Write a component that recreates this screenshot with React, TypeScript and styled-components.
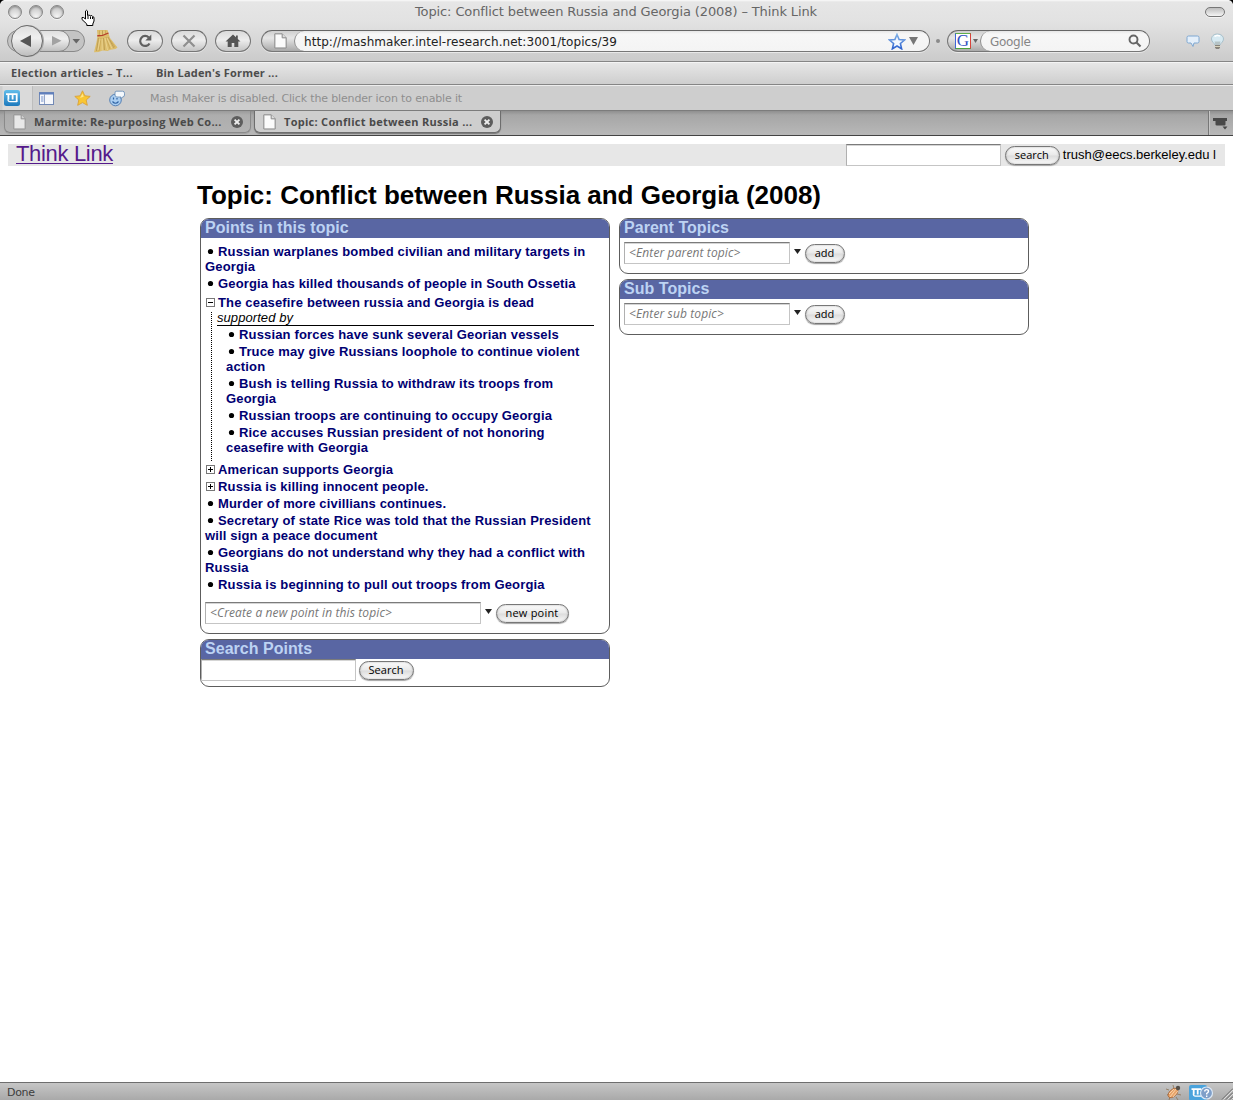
import React from "react";
import styled, { createGlobalStyle } from "styled-components";

const ui = `"Open Sans", "Noto Sans", sans-serif`;
const wide = `"DejaVu Sans", sans-serif`;
const helv = `"Liberation Sans", Arial, sans-serif`;

const GlobalStyle = createGlobalStyle`
  *, *::before, *::after { box-sizing: border-box; }
  body { margin: 0; background: #fff; color: #000; font-family: ${helv}; }
  svg { display: block; flex: none; }
  button, input { font: inherit; margin: 0; }
`;

const Window = styled.div`
  display: flex;
  flex-direction: column;
  height: 1100px;
  overflow: hidden;
`;

/* ---------- browser chrome ---------- */

const Chrome = styled.header`
  position: relative;
  height: 62px;
  background: linear-gradient(#fafafa 0, #e6e6e6 2px, #e2e2e2 22px, #cbcbcb 61px);
  border-bottom: 1px solid #858585;
`;
const Corner = styled.svg<{ $right?: boolean }>`
  position: absolute;
  top: 0;
  ${p => (p.$right ? "right: 0; transform: scaleX(-1);" : "left: 0;")}
`;
const TitleBar = styled.div`
  display: grid;
  grid-template-columns: 100px 1fr 100px;
  height: 23px;
  align-items: center;
`;
const Lights = styled.div`
  display: flex;
  gap: 7px;
  padding-left: 8px;
`;
const Light = styled.span`
  width: 14px;
  height: 14px;
  border-radius: 50%;
  border: 1px solid #858585;
  background: radial-gradient(circle at 50% 90%, #f6f6f6 0, #d5d5d5 55%, #b9b9b9 100%);
  box-shadow: inset 0 1px 2px #8a8a8a, 0 1px 0 #f5f5f5;
`;
const Title = styled.div`
  font: 13px ${wide};
  letter-spacing: -0.112px;
  color: #666;
  text-align: center;
  white-space: nowrap;
  padding-right: 1px;
`;
const Pill = styled.span`
  justify-self: end;
  margin-right: 8px;
  width: 20px;
  height: 10px;
  border: 1.5px solid #767676;
  border-radius: 5px;
  background: linear-gradient(#bdbdbd, #f5f5f5);
  box-shadow: 0 1px 0 #f4f4f4;
`;
const Cursor = styled.svg`
  position: absolute;
  left: 80px;
  top: 9px;
`;
const NavBar = styled.div`
  display: flex;
  align-items: center;
  height: 36px;
  padding-left: 7px;
`;
const NavButton = styled.button`
  display: flex;
  align-items: center;
  justify-content: center;
  width: 36px;
  height: 22px;
  margin-right: 8px;
  padding: 0;
  border: 1px solid #777;
  border-top-color: #666;
  border-radius: 11px;
  background: linear-gradient(#dadada, #ededed 45%, #c4c4c4);
  box-shadow: 0 1px 0 #e9e9e9;
`;
const Combo = styled.div<{ $w: number }>`
  display: flex;
  width: ${p => p.$w}px;
  height: 22px;
  border: 1px solid #777;
  border-top-color: #666;
  border-radius: 11px;
  background: linear-gradient(#cfcfcf, #e6e6e6 35%, #a9a9a9);
  box-shadow: 0 1px 0 #e9e9e9;
`;
const Lead = styled.div<{ $w: number }>`
  display: flex;
  align-items: center;
  width: ${p => p.$w}px;
`;
const Field = styled.div<{ $muted?: boolean; $pad: number; $ls: number }>`
  display: flex;
  flex: 1;
  align-items: center;
  padding: 0 ${p => p.$pad}px 0 9px;
  border-radius: 10px;
  border-left: 1px solid #8d8d8d;
  background: linear-gradient(#e6e6e6, #f7f7f7 3px, #f4f4f4);
  font: 12px/20px ${wide};
  letter-spacing: ${p => p.$ls}px;
  color: ${p => (p.$muted ? "#868686" : "#222")};
  white-space: nowrap;
`;
const FieldText = styled.span`
  flex: 1;
  padding-top: 1px;
`;
const Dot = styled.span`
  width: 4px;
  height: 4px;
  margin: 0 7px 0 6px;
  border-radius: 50%;
  background: #8a8a8a;
`;

const Bookmarks = styled.div`
  display: flex;
  align-items: center;
  height: 23px;
  border-top: 1px solid #f4f4f4;
  border-bottom: 1px solid #858585;
  background: linear-gradient(#e6e6e6, #cecece);
  padding: 0 0 2px 11px;
`;
const Bookmark = styled.span<{ $w: number; $ls: number }>`
  width: ${p => p.$w}px;
  font: bold 11px/20px ${ui};
  letter-spacing: ${p => p.$ls}px;
  color: #4c4c4c;
  white-space: nowrap;
`;
const ToolRow = styled.div`
  display: flex;
  align-items: center;
  height: 26px;
  border-top: 1px solid #ededed;
  border-bottom: 1px solid #7c7c7c;
  background: #cecece;
`;
const MashCell = styled.div`
  display: flex;
  align-items: center;
  width: 33px;
  height: 24px;
  padding-left: 4px;
  border-right: 1px solid #bdbdbd;
  background: linear-gradient(90deg, #cecece 2px, #dadada 3px);
`;
const ToolIcon = styled.span<{ $gap: number }>`
  margin-left: ${p => p.$gap}px;
`;
const ToolNote = styled.span`
  margin-left: 25px;
  padding-top: 1px;
  font: 11px/20px ${wide};
  letter-spacing: -0.149px;
  color: #8e8e8e;
`;
const TabStrip = styled.div`
  display: flex;
  height: 25px;
  padding-left: 4px;
  border-bottom: 1px solid #434343;
  background: linear-gradient(#8f8f8f, #a6a6a6 4px, #b8b8b8);
`;
const Tab = styled.div<{ $active?: boolean }>`
  display: flex;
  align-items: center;
  width: 247px;
  height: 22px;
  margin-right: 3px;
  padding: 0 7px 0 8px;
  border: 1px solid ${p => (p.$active ? "#6d6d6d" : "#8a8a8a")};
  border-top: 0;
  border-radius: 0 0 6px 6px;
  background: ${p => (p.$active ? "#cecece" : "linear-gradient(#9b9b9b, #adadad 4px, #b3b3b3)")};
  box-shadow: 0 1px 1px ${p => (p.$active ? "#777" : "#a0a0a0")};
  font: bold 11px/20px ${ui};
  letter-spacing: 0.28px;
  color: #4a4a4a;
  white-space: nowrap;
  > svg:first-child { opacity: ${p => (p.$active ? 1 : 0.75)}; }
`;
const TabLabel = styled.span`
  flex: 1;
  padding: 1px 0 0 8px;
`;
const TabMenu = styled.div`
  margin-left: auto;
  width: 25px;
  padding: 7px 0 0 4px;
  border-left: 1px solid #777;
  box-shadow: inset 1px 0 0 #c6c6c6;
`;

/* ---------- web page ---------- */

const Page = styled.main`
  flex: 1;
  padding: 8px 8px 0;
`;
const Masthead = styled.div`
  display: flex;
  justify-content: space-between;
  height: 22px;
  padding: 0 9px 0 8px;
  background: #e7e7e7;
`;
const Brand = styled.a`
  font: 22px/20px ${helv};
  letter-spacing: -0.33px;
  color: #551a8b;
  text-decoration: underline;
  text-decoration-thickness: 1px;
  text-underline-offset: 2px;
`;
const Account = styled.div`
  display: flex;
  align-items: flex-start;
  font: 13px/21px ${helv};
`;
const User = styled.span`
  margin-left: 3px;
`;
const TextInput = styled.input<{ $w: number }>`
  width: ${p => p.$w}px;
  height: 22px;
  padding: 0 3px 1px 4px;
  border: 1px solid #c5c5c5;
  border-top: 1px solid #7b7b7b;
  border-left-color: #b0b0b0;
  border-radius: 0;
  box-shadow: inset 0 1px 0 #d5d5d5;
  background: #fff;
  font: italic 12px ${ui};
  letter-spacing: 0.12px;
  &::placeholder { color: #777; opacity: 1; }
`;
const AquaButton = styled.button<{ $w: number; $ls?: number }>`
  display: block;
  width: ${p => p.$w}px;
  height: 19px;
  padding: 0 1px 2px 0;
  border: 1px solid #777;
  border-radius: 10px;
  background: linear-gradient(#fbfbfb, #e9e9e9 48%, #dcdcdc 52%, #fafafa);
  box-shadow: 0 1px 1px #a5a5a5, inset 0 0 2px #aaa;
  font: 11px/15px ${ui};
  letter-spacing: ${p => p.$ls ?? 0}px;
  color: #000;
  white-space: nowrap;
`;
const Content = styled.div`
  width: 832px;
  margin-left: 189px;
`;
const Heading = styled.h1`
  margin: 13px 0 7px;
  font: bold 26px/32px ${helv};
  letter-spacing: -0.022px;
  white-space: nowrap;
`;
const Columns = styled.div`
  display: flex;
  gap: 9px;
  padding-left: 3px;
`;
const Column = styled.div`
  display: flex;
  flex-direction: column;
  gap: 5px;
  width: 410px;
`;
const Panel = styled.section<{ $h: number }>`
  height: ${p => p.$h}px;
  border: 1px solid #5d5d5d;
  border-radius: 9px;
  overflow: hidden;
`;
const PanelTitle = styled.h2`
  height: 19px;
  margin: 0;
  padding-left: 4px;
  background: #5966a3;
  color: #bdd3f3;
  font: bold 16px/18px ${helv};
  letter-spacing: 0.03px;
`;
const FormRow = styled.div<{ $x: number; $y: number }>`
  display: flex;
  align-items: flex-start;
  padding: ${p => p.$y}px 0 0 ${p => p.$x}px;
`;
const ButtonSlot = styled.div<{ $x: number }>`
  margin-left: ${p => p.$x}px;
  padding-top: 2px;
`;
const ArrowSlot = styled.div`
  padding: 7px 4px 0 4px;
`;
const Points = styled.ul`
  margin: 0;
  padding: 6px 4px 0 4px;
  list-style: none;
  font: bold 13px/15px ${helv};
  letter-spacing: 0.16px;
  color: #000072;
  white-space: nowrap;
`;
const Item = styled.li<{ $after?: number }>`
  margin-bottom: ${p => p.$after ?? 2}px;
`;
const Mark = styled.span`
  display: inline-block;
  width: 13px;
  svg { display: inline-block; vertical-align: -1px; }
`;
const Branch = styled.div`
  margin: 2px 0 0 6px;
  height: 149px;
  border-left: 1px dotted #000;
`;
const Relation = styled.div`
  position: relative;
  top: -2px;
  margin-left: 5px;
  width: 377px;
  height: 16px;
  border-bottom: 1px solid #000;
  font: italic 13px/15px ${helv};
  letter-spacing: 0.07px;
  color: #000;
`;
const SubPoints = styled.ul`
  margin: -1px 0 0;
  padding: 0 0 0 14px;
  list-style: none;
`;
const StatusBar = styled.footer`
  display: flex;
  align-items: center;
  height: 18px;
  padding: 2px 0 0 7px;
  border-top: 1px solid #6e6e6e;
  background: linear-gradient(#c6c6c6, #a9a9a9);
  font: 11px/15px ${wide};
  letter-spacing: -0.3px;
  color: #3d3d3d;
`;
const Tray = styled.div`
  display: flex;
  align-items: center;
  margin-left: auto;
  gap: 7px;
`;

/* ---------- drawings ---------- */

const HandCursor = () => (
  <Cursor width="16" height="18" viewBox="0 0 16 18">
    <path d="M5.500 2Q6.500.5 7.500 2V6.500L9 6l1.300.8 1.500-.3 1 1.200 1.200.6V12l-1.200 3v1.500h-6V15L2 10.500v-2h1.500L5.500 10z" fill="#fff" stroke="#000" />
    <path d="M8 7v3M10.500 7.500v2.500M12.500 8v2" stroke="#000" />
  </Cursor>
);

const BackForward = () => (
  <svg width="79" height="36" viewBox="0 0 79 36">
    <defs>
      <linearGradient id="btn" x1="0" y1="0" x2="0" y2="1">
        <stop offset="0" stopColor="#dedede" />
        <stop offset=".4" stopColor="#efefef" />
        <stop offset="1" stopColor="#bcbcbc" />
      </linearGradient>
    </defs>
    <rect x=".5" y="7.500" width="77" height="21" rx="10.500" fill="#c4c4c4" stroke="#898989" />
    <path d="M30 7.500h22a10.500 10.500 0 0 1 0 21H30z" fill="url(#btn)" stroke="#858585" />
    <circle cx="21" cy="18" r="16" fill="#aaa" />
    <circle cx="20" cy="18" r="15.500" fill="url(#btn)" stroke="#6b6b6b" />
    <path d="M24 12v12l-11-6z" fill="#555" />
    <path d="M45 13v9.500l9.500-4.800z" fill="#a2a2a2" />
    <path d="M65.500 16h7.500l-3.700 4.500z" fill="#666" />
  </svg>
);

const Broom = () => (
  <svg width="26" height="26" viewBox="0 0 26 26">
    <path d="M4 2H14.500L17 10 24.500 19.500l-2 1.500-5 .8-3 1.200-5-.5-4 1.500-4.500.2L3.500 14 4.500 8z" fill="#dcbd6c" />
    <path d="M5.500 10L3.500 23M10.500 10l1 12M15 9l6 11M9.500 2.500V7" stroke="#b0904a" strokeWidth=".7" />
    <path d="M8 10L6 23M13 9l4 12M6.500 2.500v5M12.500 2.500V6M17 12l5 7" stroke="#c6a352" strokeWidth=".8" />
    <path d="M7 11L5 22M9.200 11v11M12 10l2.500 12M14 10l5 10.500M8 3v4M11 3v4" stroke="#edd795" strokeWidth=".8" />
    <path d="M4.300 7.800Q10 8 15.500 5" stroke="#b5402c" strokeWidth="1.400" fill="none" />
  </svg>
);

const ReloadIcon = () => (
  <svg width="16" height="16" viewBox="0 0 16 16">
    <path d="M11.800 4.500A5 5 0 1 0 12.500 10.500" fill="none" stroke="#606060" strokeWidth="2.200" />
    <path d="M14.300 1.500v6H8.300z" fill="#606060" />
  </svg>
);
const StopIcon = () => (
  <svg width="14" height="14" viewBox="0 0 14 14">
    <path d="M1.500 1.500l11 11M12.500 1.500l-11 11" stroke="#8f8f8f" strokeWidth="2.200" />
  </svg>
);
const HomeIcon = () => (
  <svg width="16" height="14" viewBox="0 0 16 14">
    <path d="M8 .5L.5 7.500h2.200V13h4V9h2.600v4h4V7.500h2.200L12.800 5V1.500H11v1.800z" fill="#555" />
  </svg>
);
const Doc = () => (
  <svg width="13" height="16" viewBox="0 0 13 16">
    <path d="M.8.8h7.400l4 4V15H.8z" fill="#eee" stroke="#8c8c8c" />
    <path d="M2 2h5.500v3.500H11V14H2z" fill="#fbfbfb" />
    <path d="M8.200.8v4h4" fill="#ddd" stroke="#8c8c8c" />
  </svg>
);
const CloseIcon = () => (
  <svg width="12" height="12" viewBox="0 0 12 12">
    <circle cx="6" cy="6" r="6" fill="#5d5d5d" />
    <path d="M3.600 3.600l4.800 4.800M8.400 3.600L3.600 8.400" stroke="#eee" strokeWidth="1.900" />
  </svg>
);
const StarOutline = () => (
  <svg width="18" height="17" viewBox="0 0 18 17">
    <defs>
      <linearGradient id="starLine" x1="0" y1="0" x2="0" y2="1">
        <stop offset="0" stopColor="#7fb0e6" />
        <stop offset="1" stopColor="#2f63cf" />
      </linearGradient>
    </defs>
    <path d="M9 1.500l2.100 5.100 5.400.4-4.100 3.500 1.200 5.300L9 13l-4.600 2.800 1.200-5.300L1.500 7l5.400-.4z" fill="#f3f8ff" stroke="url(#starLine)" strokeWidth="1.600" />
  </svg>
);
const Down = ({ w, h, fill = "#666" }: { w: number; h: number; fill?: string }) => (
  <svg width={w} height={h} viewBox="0 0 10 10" preserveAspectRatio="none">
    <path d="M0 0h10L5 10z" fill={fill} />
  </svg>
);
const GoogleG = styled.span`
  width: 16px;
  height: 16px;
  margin: 0 2px 0 7px;
  border: 1px solid;
  border-color: #5fae4b #d8433b #4ba33a #3f67d6;
  background: #fff;
  font: 17px/14px "Liberation Serif", serif;
  color: #3151c0;
  text-align: center;
`;
const Magnifier = () => (
  <svg width="14" height="14" viewBox="0 0 14 14">
    <circle cx="5.500" cy="5.500" r="4" fill="none" stroke="#666" strokeWidth="1.900" />
    <path d="M8.500 8.500l4 4" stroke="#666" strokeWidth="2.200" />
  </svg>
);
const ChatIcon = () => (
  <svg width="14" height="13" viewBox="0 0 14 13">
    <path d="M2.500 1h9q1.500 0 1.500 1.500v4Q13 8 11.500 8H8l-1 3.500L5 8H2.500Q1 8 1 6.500v-4Q1 1 2.500 1z" fill="#e4effa" stroke="#7fa8d2" />
  </svg>
);
const BulbIcon = () => (
  <svg width="15" height="17" viewBox="0 0 15 17">
    <path d="M7.500 1C3.500 1 1.500 3.500 1.500 6c0 3 3 4 3.500 6h5c.5-2 3.500-3 3.500-6 0-2.500-2-5-6-5z" fill="#d7eaf2" stroke="#a9c0ca" />
    <path d="M4.500 3.500Q7 2 10 3" stroke="#fff" strokeWidth="1.500" fill="none" />
    <path d="M4.500 8.500h6L9.500 12h-4z" fill="#b6c3c5" />
    <path d="M5 12h5v2.500L9 16H6l-1-1.500z" fill="#87837a" />
    <path d="M5 13.500h5" stroke="#d9d3bd" />
  </svg>
);
const MashLogo = () => (
  <svg width="16" height="16" viewBox="0 0 16 16">
    <defs>
      <linearGradient id="mash" x1="0" y1="0" x2="0" y2="1">
        <stop offset="0" stopColor="#62bdea" />
        <stop offset="1" stopColor="#1c79bd" />
      </linearGradient>
    </defs>
    <rect width="16" height="16" rx="2.500" fill="url(#mash)" />
    <path d="M2 4.200H12.700V12M8.600 4V9.500M4.400 4V9.800" fill="none" stroke="#fff" strokeWidth="1.800" />
    <path d="M4 9.500Q4 11.600 6 11.600H13" fill="none" stroke="#fff" strokeWidth="1.200" />
  </svg>
);
const SidebarIcon = () => (
  <svg width="15" height="13" viewBox="0 0 15 13">
    <rect x=".5" y=".5" width="14" height="12" fill="#f6f8fc" stroke="#7289b5" />
    <path d="M0 1.500h15" stroke="#5f7fbd" strokeWidth="2" />
    <path d="M5.500 2v10" stroke="#93a5c9" />
    <path d="M2 5h2.500M2 7h2.500M2 9h2.500" stroke="#7692c9" />
  </svg>
);
const GoldStar = () => (
  <svg width="17" height="16" viewBox="0 0 17 16">
    <path d="M8.500.8l2.300 5 5.400.6-4 3.600 1.100 5.300-4.800-2.700-4.800 2.700L4.800 10l-4-3.600 5.400-.6z" fill="#f9c633" stroke="#d9a23a" strokeWidth=".9" />
    <path d="M8.500 3.500l1.200 3.300L6 8z" fill="#fde58a" />
  </svg>
);
const BuddyIcon = () => (
  <svg width="16" height="17" viewBox="0 0 16 17">
    <circle cx="6.500" cy="10" r="5.800" fill="#a9cdf0" stroke="#5580b5" />
    <path d="M3.500 11.500q3 3.500 6 0" fill="none" stroke="#2f62a3" strokeWidth="1.200" />
    <path d="M4.500 7.500v2M8 8v1.500" stroke="#2f62a3" strokeWidth="1.200" />
    <path d="M7 1.200h6.500q2 0 2 2V5q0 2-2 2L12 9V7H8Q6 7 6 5V3q0-1.800 1-1.800z" fill="#f4f8fc" stroke="#6f93ba" strokeWidth=".9" />
  </svg>
);
const TabListIcon = () => (
  <svg width="15" height="13" viewBox="0 0 15 13">
    <path d="M0 0h14v3h-1.500v3.500q0 1-1 1H4q-1.500 0-1.500-1V3H0z" fill="#484848" />
    <path d="M9.500 8.500h5L12 11.500z" fill="#484848" />
  </svg>
);
const Bug = () => (
  <svg width="16" height="15" viewBox="0 0 16 15">
    <path d="M3 5L0 4M5 8L1 10M8 4L7 0M10 12l2 3M11 9l4 1M4 12l-1 3" stroke="#8c7254" strokeWidth=".8" />
    <ellipse cx="7" cy="8" rx="5.800" ry="3.500" transform="rotate(-42 7 8)" fill="#e9a368" stroke="#a75d2b" strokeWidth=".7" />
    <path d="M4 12l6-8M3 9l5-5M7 12l5-6" stroke="#fbe0bd" strokeWidth=".8" />
    <circle cx="12" cy="3" r="2.200" fill="#55504a" />
  </svg>
);
const MashHelp = () => (
  <svg width="25" height="16" viewBox="0 0 25 16">
    <rect width="18" height="15.500" rx="2" fill="#4aa3dc" />
    <path d="M2.500 4.200H12M4.700 4V9.500M8.700 4V9.500" fill="none" stroke="#fff" strokeWidth="1.800" />
    <path d="M4.400 9q0 2.200 2 2.200H12" fill="none" stroke="#fff" strokeWidth="1.200" />
    <circle cx="17.500" cy="8" r="6" fill="#7f9fc9" stroke="#dce8f5" strokeWidth="1.200" />
    <path d="M15.700 6.500q0-1.900 1.900-1.900t1.900 1.600q0 1-1.800 2.300v.9M17.700 10.500v1.400" fill="none" stroke="#fff" strokeWidth="1.400" />
  </svg>
);
const Grip = () => (
  <svg width="12" height="14" viewBox="0 0 12 14">
    <path d="M1 13.500L12 2.500M5 13.500l7-7M9 13.500l3-3" stroke="#636363" />
    <path d="M2.400 13.500l9.600-9.600M6.400 13.500L12 7.900M10.400 13.500l1.600-1.600" stroke="#e2e2e2" />
  </svg>
);
const Bullet = () => (
  <svg width="11" height="11" viewBox="0 0 11 11">
    <circle cx="5.500" cy="5.500" r="2.600" fill="#000" />
  </svg>
);
const Toggle = ({ open }: { open?: boolean }) => (
  <svg width="11" height="11" viewBox="0 0 11 11" shapeRendering="crispEdges">
    <rect x="1.500" y="1.500" width="8" height="8" fill="#fff" stroke="#777" />
    <path d={open ? "M3 5.500h5" : "M3 5.500h5M5.500 3v5"} stroke="#000" />
  </svg>
);

/* ---------- data ---------- */

type Kind = "leaf" | "closed" | "open";
type Point = { kind: Kind; lines: string[]; after?: number; children?: string[][] };

const points: Point[] = [
  { kind: "leaf", lines: ["Russian warplanes bombed civilian and military targets in", "Georgia"] },
  { kind: "leaf", lines: ["Georgia has killed thousands of people in South Ossetia"], after: 4 },
  {
    kind: "open",
    lines: ["The ceasefire between russia and Georgia is dead"],
    after: 1,
    children: [
      ["Russian forces have sunk several Georian vessels"],
      ["Truce may give Russians loophole to continue violent", "action"],
      ["Bush is telling Russia to withdraw its troops from", "Georgia"],
      ["Russian troops are continuing to occupy Georgia"],
      ["Rice accuses Russian president of not honoring", "ceasefire with Georgia"],
    ],
  },
  { kind: "closed", lines: ["American supports Georgia"] },
  { kind: "closed", lines: ["Russia is killing innocent people."] },
  { kind: "leaf", lines: ["Murder of more civillians continues."] },
  { kind: "leaf", lines: ["Secretary of state Rice was told that the Russian President", "will sign a peace document"] },
  { kind: "leaf", lines: ["Georgians do not understand why they had a conflict with", "Russia"] },
  { kind: "leaf", lines: ["Russia is beginning to pull out troops from Georgia"] },
];

const PointText = ({ kind, lines }: { kind: Kind; lines: string[] }) => (
  <>
    {lines.map((line, i) => (
      <div key={line}>
        {i === 0 && <Mark>{kind === "leaf" ? <Bullet /> : <Toggle open={kind === "open"} />}</Mark>}
        {line}
      </div>
    ))}
  </>
);

const PointItem = ({ kind, lines, after, children }: Point) => (
  <Item $after={after}>
    <PointText kind={kind} lines={lines} />
    {children && (
      <Branch>
        <Relation>supported by</Relation>
        <SubPoints>
          {children.map(c => (
            <Item key={c[0]}>
              <PointText kind="leaf" lines={c} />
            </Item>
          ))}
        </SubPoints>
      </Branch>
    )}
  </Item>
);

type FormProps = { hint: string; width: number; label: string; buttonWidth: number; ls?: number; y: number };

const TopicForm = ({ hint, width, label, buttonWidth, ls, y }: FormProps) => (
  <FormRow $x={4} $y={y}>
    <TextInput $w={width} placeholder={hint} />
    <ArrowSlot><Down w={7} h={5} fill="#222" /></ArrowSlot>
    <ButtonSlot $x={0}><AquaButton $w={buttonWidth} $ls={ls}>{label}</AquaButton></ButtonSlot>
  </FormRow>
);

export default function App() {
  return (
    <Window>
      <GlobalStyle />
      <Chrome>
        <TitleBar>
          <Lights><Light /><Light /><Light /></Lights>
          <Title>Topic: Conflict between Russia and Georgia (2008) – Think Link</Title>
          <Pill />
        </TitleBar>
        <NavBar>
          <BackForward />
          <ToolIcon $gap={7}><Broom /></ToolIcon>
          <ToolIcon $gap={8} />
          <NavButton><ReloadIcon /></NavButton>
          <NavButton><StopIcon /></NavButton>
          <NavButton><HomeIcon /></NavButton>
          <ToolIcon $gap={2} />
          <Combo $w={669}>
            <Lead $w={32}><ToolIcon $gap={12}><Doc /></ToolIcon></Lead>
            <Field $pad={11} $ls={0.057}>
              <FieldText>http://mashmaker.intel-research.net:3001/topics/39</FieldText>
              <StarOutline />
              <ToolIcon $gap={3}><Down w={9} h={8} fill="#777" /></ToolIcon>
            </Field>
          </Combo>
          <Dot />
          <Combo $w={203}>
            <Lead $w={32}><GoogleG>G</GoogleG><Down w={5} h={4} /></Lead>
            <Field $muted $pad={7} $ls={-0.3}>
              <FieldText>Google</FieldText>
              <Magnifier />
            </Field>
          </Combo>
          <ToolIcon $gap={36}><ChatIcon /></ToolIcon>
          <ToolIcon $gap={10}><BulbIcon /></ToolIcon>
        </NavBar>
        <HandCursor />
        <Corner width="5" height="5" viewBox="0 0 5 5"><path d="M0 0h4L2 1 1 2 0 4z" fill="#000" /></Corner>
        <Corner $right width="5" height="5" viewBox="0 0 5 5"><path d="M0 0h4L2 1 1 2 0 4z" fill="#000" /></Corner>
      </Chrome>
      <Bookmarks>
        <Bookmark $w={145} $ls={0.314}>Election articles – T...</Bookmark>
        <Bookmark $w={130} $ls={0.18}>Bin Laden's Former ...</Bookmark>
      </Bookmarks>
      <ToolRow>
        <MashCell><MashLogo /></MashCell>
        <ToolIcon $gap={6}><SidebarIcon /></ToolIcon>
        <ToolIcon $gap={20}><GoldStar /></ToolIcon>
        <ToolIcon $gap={18}><BuddyIcon /></ToolIcon>
        <ToolNote>Mash Maker is disabled. Click the blender icon to enable it</ToolNote>
      </ToolRow>
      <TabStrip>
        <Tab><Doc /><TabLabel>Marmite: Re-purposing Web Co...</TabLabel><CloseIcon /></Tab>
        <Tab $active><Doc /><TabLabel>Topic: Conflict between Russia ...</TabLabel><CloseIcon /></Tab>
        <TabMenu><TabListIcon /></TabMenu>
      </TabStrip>

      <Page>
        <Masthead>
          <Brand>Think Link</Brand>
          <Account>
            <TextInput $w={155} />
            <ButtonSlot $x={4}><AquaButton $w={55}>search</AquaButton></ButtonSlot>
            <User>trush@eecs.berkeley.edu l</User>
          </Account>
        </Masthead>
        <Content>
          <Heading>Topic: Conflict between Russia and Georgia (2008)</Heading>
          <Columns>
            <Column>
              <Panel $h={416}>
                <PanelTitle>Points in this topic</PanelTitle>
                <Points>{points.map(p => <PointItem key={p.lines[0]} {...p} />)}</Points>
                <TopicForm hint="<Create a new point in this topic>" width={276} label="new point" buttonWidth={73} ls={0.21} y={8} />
              </Panel>
              <Panel $h={48}>
                <PanelTitle>Search Points</PanelTitle>
                <FormRow $x={0} $y={0}>
                  <TextInput $w={155} />
                  <ButtonSlot $x={3}><AquaButton $w={55}>Search</AquaButton></ButtonSlot>
                </FormRow>
              </Panel>
            </Column>
            <Column>
              <Panel $h={56}>
                <PanelTitle>Parent Topics</PanelTitle>
                <TopicForm hint="<Enter parent topic>" width={166} label="add" buttonWidth={40} y={4} />
              </Panel>
              <Panel $h={56}>
                <PanelTitle>Sub Topics</PanelTitle>
                <TopicForm hint="<Enter sub topic>" width={166} label="add" buttonWidth={40} y={4} />
              </Panel>
            </Column>
          </Columns>
        </Content>
      </Page>

      <StatusBar>
        Done
        <Tray><Bug /><MashHelp /><Grip /></Tray>
      </StatusBar>
    </Window>
  );
}
